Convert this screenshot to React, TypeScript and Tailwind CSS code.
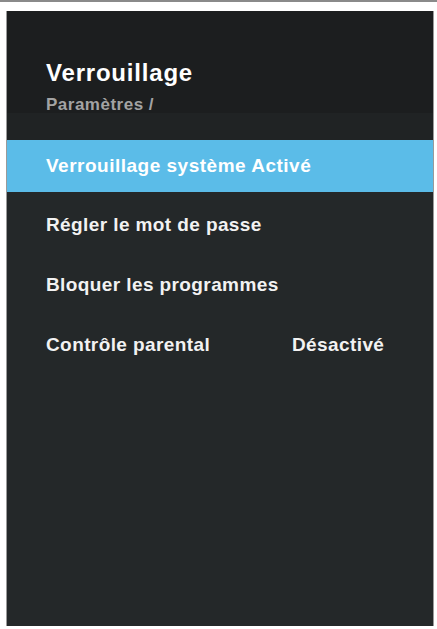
const font = { fontFamily: '"Liberation Sans", Arial, sans-serif' }

const rows = [
  { label: 'Régler le mot de passe', value: '' },
  { label: 'Bloquer les programmes', value: '' },
  { label: 'Contrôle parental', value: 'Désactivé' },
]

export default function App() {
  return (
    <div
      className="w-[437px] h-[629px] bg-white border-t-[2px] border-[#8a8a8a] pt-[9px] pl-[6px] pr-[3px] pb-[3px] flex"
      style={font}
    >
      <div className="flex-1 flex flex-col bg-[#242829] border-l border-r border-[#9a9a9a]">
        {/* Header */}
        <div className="h-[102px] bg-[#1c1e1f] pl-[39px] pt-[48px]">
          <div className="text-[24px] leading-[28px] font-bold text-white tracking-[0.8px]">
            Verrouillage
          </div>
          <div className="text-[17px] leading-[20px] font-bold text-[#a3a3a3] tracking-[0.5px] mt-[8px]">
            Paramètres /
          </div>
        </div>
        <div className="h-[27px] bg-[#202324]" />

        {/* Selected item */}
        <div className="h-[52px] bg-[#5bbce8] flex items-center pl-[39px]">
          <span className="text-[19px] font-bold text-white tracking-[0.5px]">
            Verrouillage système Activé
          </span>
        </div>

        {/* Other items */}
        <div className="mt-[3px] flex flex-col">
          {rows.map((r) => (
            <div key={r.label} className="h-[60px] flex items-center pl-[39px]">
              <span className="w-[246px] text-[19px] font-bold text-[#f2f2f2] tracking-[0.4px]">
                {r.label}
              </span>
              {r.value && (
                <span className="text-[19px] font-bold text-[#f2f2f2] tracking-[0.4px]">
                  {r.value}
                </span>
              )}
            </div>
          ))}
        </div>
      </div>
    </div>
  )
}
